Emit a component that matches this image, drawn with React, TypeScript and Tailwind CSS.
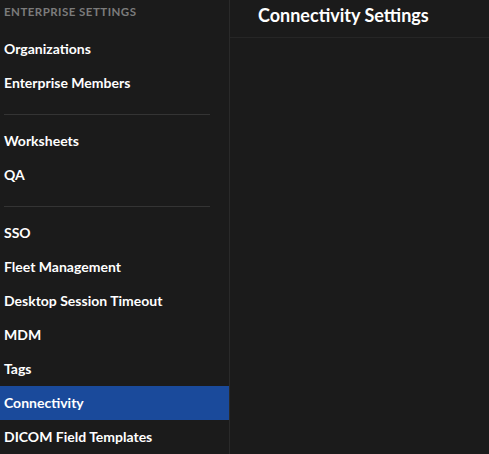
const groups: string[][] = [
  ["Organizations", "Enterprise Members"],
  ["Worksheets", "QA"],
  [
    "SSO",
    "Fleet Management",
    "Desktop Session Timeout",
    "MDM",
    "Tags",
    "Connectivity",
    "DICOM Field Templates",
  ],
];

const Sidebar = ({ active }: { active: string }) => {
  return (
    <div className="w-[230px] shrink-0 border-r border-[#2a2a2a] flex flex-col">
      <div className="h-[32px] px-1 pt-[5px] text-[11.5px] font-bold tracking-[0.04em] text-[#7b7b7b] uppercase leading-[14px]">
        Enterprise Settings
      </div>
      {groups.map((items, gi) => (
        <div key={gi}>
          {gi > 0 && <div className="mt-[14px] mb-[9px] ml-1 w-[206px] h-px bg-[#343434]" />}
          {items.map((item) => (
            <div
              key={item}
              className={
                "h-[34px] flex items-center px-1 pb-[2px] text-[14px] font-bold text-white " +
                (item === active ? "bg-[#1a4a9b]" : "")
              }
            >
              {item}
            </div>
          ))}
        </div>
      ))}
    </div>
  );
};

export default function App() {
  return (
    <div
      className="w-[489px] h-[454px] overflow-hidden bg-[#1b1b1b] flex"
      style={{ fontFamily: "Lato, 'Noto Sans', sans-serif" }}
    >
      <Sidebar active="Connectivity" />
      <div className="flex-1 flex flex-col">
        <div className="h-[38px] border-b border-[#262626] pl-[28px] pt-[4px] text-[18px] font-bold text-white leading-[22px]">
          Connectivity Settings
        </div>
      </div>
    </div>
  );
}
